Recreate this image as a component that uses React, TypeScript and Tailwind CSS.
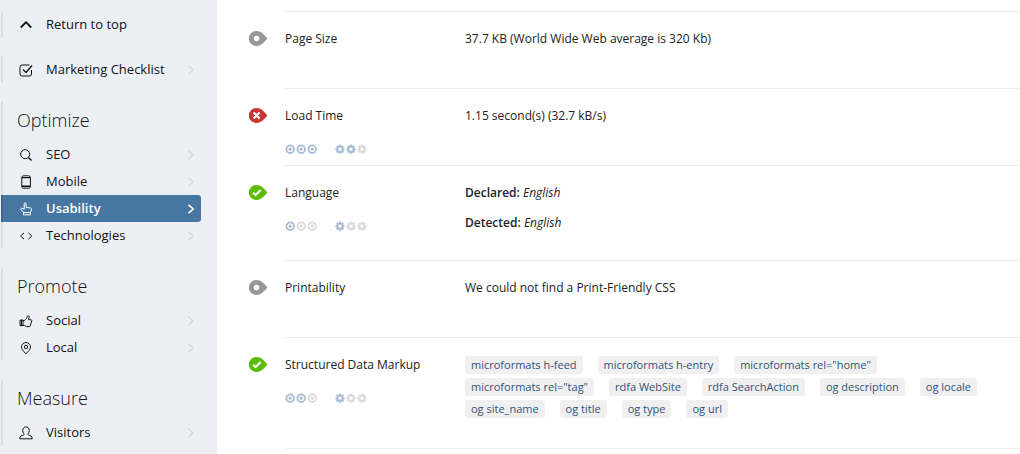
import type { ReactNode } from 'react';

type Status = 'good' | 'bad' | 'neutral';

interface NavItem {
    label: string;
    icon: ReactNode;
    active?: boolean;
    noArrow?: boolean;
}

interface NavGroup {
    title?: string;
    items: NavItem[];
}

interface ReportRow {
    label: string;
    status: Status;
    impact?: number;
    effort?: number;
    content: ReactNode;
}

const navGroups: NavGroup[] = [
    { items: [{ label: 'Return to top', noArrow: true, icon: <path d="M1.8 9.5 7 4.2l5.2 5.3" strokeWidth="1.8" /> }] },
    {
        items: [
            {
                label: 'Marketing Checklist',
                icon: (
                    <>
                        <path d="M10.5 2H3a2 2 0 0 0-2 2v7a2 2 0 0 0 2 2h7.5a2 2 0 0 0 2-2V7" />
                        <path d="m4 6.5 3 3 6-7" strokeWidth="1.3" />
                    </>
                ),
            },
        ],
    },
    {
        title: 'Optimize',
        items: [
            {
                label: 'SEO',
                icon: (
                    <>
                        <circle cx="6.2" cy="6.2" r="4.5" />
                        <path d="m9.5 9.5 3 3" strokeWidth="1.5" />
                    </>
                ),
            },
            {
                label: 'Mobile',
                icon: (
                    <>
                        <rect x="2.8" y="0.8" width="8.6" height="12.4" rx="1.8" />
                        <path d="M2.8 2.6h8.6M2.8 11.2h8.6" strokeWidth="1.4" />
                    </>
                ),
            },
            {
                label: 'Usability',
                active: true,
                icon: (
                    <path d="M4.5 10.2 2 7.6C1.3 6.7 2.2 6 3 6.3l2.2.9V1.9c0-1.3 1.8-1.3 1.8 0v3.4l4.6.7c.8.1 1 .6.9 1.3l-1 2.9v2.6h-7zM4.5 10.6h7" strokeWidth="1" />
                ),
            },
            { label: 'Technologies', icon: <path d="M5 3.8 1.6 7 5 10.2M9.4 3.8 12.8 7 9.4 10.2" /> },
        ],
    },
    {
        title: 'Promote',
        items: [
            {
                label: 'Social',
                icon: (
                    <>
                        <path d="M1 6h3v5.6H1zM2.5 6v5.5" />
                        <path d="M4 6.5h1.3C7.3 5.3 8 3.8 8.3 2.3c.5-1.3 2.1-.6 1.8.9L9.6 5.7h2.1c.9 0 1.2.6 1 1.3l-1.3 4.5c-.2.7-.6 1.1-1.3 1.1H7.5l-2-1.2H4" />
                    </>
                ),
            },
            {
                label: 'Local',
                icon: (
                    <>
                        <path d="M7 12.8C4.6 10.2 2.5 8.3 2.5 6a4.5 4.5 0 0 1 9 0c0 2.3-2.1 4.2-4.5 6.8z" />
                        <circle cx="7" cy="6" r="1.7" />
                    </>
                ),
            },
        ],
    },
    {
        title: 'Measure',
        items: [
            {
                label: 'Visitors',
                icon: (
                    <path d="M5.3 8.3C4.2 7.2 3.7 5.7 3.8 4.2 3.9 2 5.2.9 7 .9s3.1 1.1 3.2 3.3c.1 1.5-.4 3-1.5 4.1.2 1 3.6 1.2 4.2 2.6l.3 1.9H.8l.3-1.9c.6-1.4 4-1.6 4.2-2.6z" />
                ),
            },
        ],
    },
];

const tags = [
    'microformats h-feed',
    'microformats h-entry',
    'microformats rel="home"',
    'microformats rel="tag"',
    'rdfa WebSite',
    'rdfa SearchAction',
    'og description',
    'og locale',
    'og site_name',
    'og title',
    'og type',
    'og url',
];

const rows: ReportRow[] = [
    { label: 'Page Size', status: 'neutral', content: '37.7 KB (World Wide Web average is 320 Kb)' },
    { label: 'Load Time', status: 'bad', impact: 3, effort: 2, content: '1.15 second(s) (32.7 kB/s)' },
    {
        label: 'Language',
        status: 'good',
        impact: 1,
        effort: 1,
        content: (
            <>
                <p className="mb-2.5"><strong className="font-semibold">Declared:</strong> <em>English</em></p>
                <p className="mb-2.5"><strong className="font-semibold">Detected:</strong> <em>English</em></p>
            </>
        ),
    },
    { label: 'Printability', status: 'neutral', content: 'We could not find a Print-Friendly CSS' },
    {
        label: 'Structured Data Markup',
        status: 'good',
        impact: 2,
        effort: 1,
        content: (
            <ul className="flex flex-wrap gap-x-[15px] gap-y-1 pt-px pb-[13px] text-[11px] leading-[18px] text-[#31527b]">
                {tags.map((tag) => (
                    <li key={tag} className="rounded-[3px] bg-[#f0f0f0] px-1.5">{tag}</li>
                ))}
            </ul>
        ),
    },
];

const statusColors: Record<Status, string> = {
    good: 'text-[#5cbd00]',
    bad: 'text-[#c93531]',
    neutral: 'text-[#979797]',
};

const StatusIcon = ({ status }: { status: Status }) => (
    <svg viewBox="0 0 18 15" role="img" aria-label={status} className={`h-[15px] w-[18px] ${statusColors[status]}`}>
        <path d="M7.3 0C10.5 0 12.4 1.2 14.5 3.2L17.6 6.6a1.2 1.2 0 0 1 0 1.8l-3.1 3.4C12.4 13.8 10.5 15 7.3 15a7.5 7.5 0 0 1 0-15z" fill="currentColor" />
        {status === 'good' && <path d="m4 7.7 2.6 2.4L11.6 5" fill="none" stroke="#fff" strokeWidth="2" />}
        {status === 'bad' && <path d="m4.6 4.5 6 6M10.6 4.5l-6 6" fill="none" stroke="#fff" strokeWidth="2.2" />}
        {status === 'neutral' && <circle cx="7.5" cy="7.5" r="2.8" fill="#fff" />}
    </svg>
);

const Target = ({ on }: { on: boolean }) => (
    <svg viewBox="0 0 10 10" className={`size-[10px] ${on ? 'text-[#a9bdd2]' : 'text-[#dadada]'}`}>
        <circle cx="5.2" cy="5.2" r="3.8" fill="none" stroke="currentColor" strokeWidth="1.8" />
        <circle cx="5.2" cy="5.2" r="1.6" fill="currentColor" />
    </svg>
);

const Gear = ({ on }: { on: boolean }) => (
    <svg viewBox="0 0 10 10" className={`size-[10px] ${on ? 'text-[#a9bdd2]' : 'text-[#dadada]'}`}>
        <g fill="none" stroke="currentColor">
            <circle cx="5" cy="5.2" r="2.7" strokeWidth="2.2" />
            <path d="M5 .6v1.4M5 8.4v1.4M.4 5.2h1.4M8.2 5.2h1.4M1.7 1.9l1 1M7.3 7.5l1 1M1.7 8.5l1-1M7.3 2.9l1-1" strokeWidth="1.9" />
        </g>
    </svg>
);

const Sidebar = () => (
    <nav className="flex w-[217px] shrink-0 flex-col gap-[18px] bg-[#ecf0f5] pt-[11px] pb-2 pl-px">
        {navGroups.map((group) => (
            <div key={group.items[0].label} className="rounded-l-xs border-l-2 border-[#d5e0e9]">
                {group.title && (
                    <h2 className="h-10 pl-3.5 text-[18px] leading-[38px] font-light text-[#111]">{group.title}</h2>
                )}
                {group.items.map((item) => (
                    <a
                        key={item.label}
                        href="#"
                        className={`-ml-0.5 mr-4 flex h-[27px] items-center border-l-2 pl-4 pr-1.5 text-[13px] ${item.active ? 'rounded-r-[3px] border-[#3b6690] bg-[#4776a3] font-semibold text-white' : 'border-transparent text-[#111]'}`}
                    >
                        <svg viewBox="0 0 14 14" fill="none" stroke="currentColor" strokeWidth="1" strokeLinejoin="round" className="mr-[13px] size-3.5 shrink-0">
                            {item.icon}
                        </svg>
                        <span className="grow">{item.label}</span>
                        {!item.noArrow && (
                            <svg viewBox="0 0 8 12" fill="none" stroke="currentColor" strokeWidth="1.6" className={`h-3 w-2 ${item.active ? 'text-white' : 'text-[#d7dbdf]'}`}>
                                <path d="m1.5 1.8 4.8 4.2-4.8 4.2" />
                            </svg>
                        )}
                    </a>
                ))}
            </div>
        ))}
    </nav>
);

export default function App() {
    return (
        <div className="flex min-h-screen bg-white font-['Open_Sans','Noto_Sans',sans-serif]">
            <Sidebar />
            <main className="min-w-0 grow pt-[11px] pl-8 text-[12px] leading-5 text-[#222]">
                {rows.map((row) => (
                    <section key={row.label} className="flex">
                        <div className="w-9 shrink-0 pt-5">
                            <StatusIcon status={row.status} />
                        </div>
                        <div className="flex min-h-[77px] grow border-t border-[#ebebeb] pt-[17px]">
                            <div className="w-[180px] shrink-0">
                                <h3>{row.label}</h3>
                                {row.impact !== undefined && row.effort !== undefined && (
                                    <div className="mt-[18px] flex gap-[18px]">
                                        <div className="flex gap-px">
                                            {[1, 2, 3].map((n) => <Target key={n} on={n <= row.impact!} />)}
                                        </div>
                                        <div className="flex gap-px">
                                            {[1, 2, 3].map((n) => <Gear key={n} on={n <= row.effort!} />)}
                                        </div>
                                    </div>
                                )}
                            </div>
                            <div className="min-w-0 flex-1 pb-[17px]">{row.content}</div>
                        </div>
                    </section>
                ))}
                <hr className="ml-9 border-[#ebebeb]" />
            </main>
        </div>
    );
}
